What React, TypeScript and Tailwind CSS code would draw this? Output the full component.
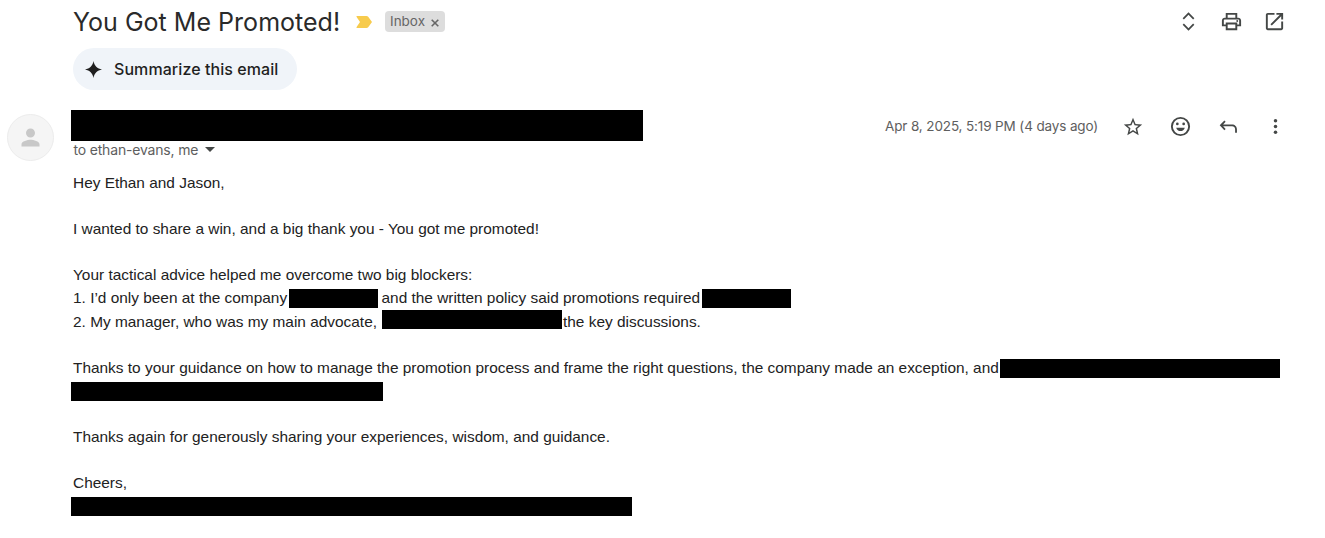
import type { ReactNode } from 'react';
import clsx from 'clsx';

function Icon({ className, children }: { className?: string; children: ReactNode }) {
  return (
    <svg viewBox="0 0 24 24" fill="currentColor" aria-hidden="true" className={clsx('block shrink-0', className)}>
      {children}
    </svg>
  );
}

function Redacted({ className }: { className?: string }) {
  return <span className={clsx('block shrink-0 bg-black', className)} />;
}

function Line({ children }: { children?: ReactNode }) {
  return <div className="flex h-[23.1px] items-start whitespace-pre">{children}</div>;
}

function Subject() {
  return (
    <div className="flex h-[43px] items-center pl-[73px] pr-[41px]">
      <h1 className="w-[283px] whitespace-nowrap font-['Inter','Liberation_Sans',sans-serif] text-[25px] leading-[42px] font-normal tracking-[0.02px] text-[#2a2a2a]">
        You Got Me Promoted!
      </h1>
      <svg viewBox="0 0 16 12" aria-hidden="true" className="mr-[13px] h-3 w-4 fill-[#f7cb4d]">
        <path d="M1 0h9.5q1 0 1.7.8L16 6l-3.8 5.2q-.7.8-1.7.8H1q-1 0-.4-.9L4 6 .6.9Q0 0 1 0z" />
      </svg>
      <div className="flex h-[21px] w-[60px] items-center rounded-[4px] bg-[#dddddd] pl-[5px] font-['Inter','Liberation_Sans',sans-serif] text-[13.5px] text-[#666666]">
        <span className="w-[41px]">Inbox</span>
        <svg viewBox="0 0 8 8" aria-hidden="true" className="mt-0.5 size-[8px] fill-none stroke-current stroke-[1.6]">
          <path d="M.7.7l6.6 6.6M7.3.7L.7 7.3" />
        </svg>
      </div>
      <div className="ml-auto flex items-center text-[#444746]">
        <Icon className="mr-[20px] size-[23px]">
          <path d="M12 5l4.8 4.800 1.300-1.300L12 2.400 5.900 8.500l1.300 1.300zM12 19l-4.800-4.800-1.300 1.300L12 21.600l6.100-6.100-1.300-1.300z" />
        </Icon>
        <Icon className="mr-[20px] size-[23px]">
          <path d="M19 8h-1V3H6v5H5c-1.66 0-3 1.34-3 3v6h4v4h12v-4h4v-6c0-1.66-1.34-3-3-3zM8 5h8v3H8V5zm8 12v2H8v-4h8v2zm2-2v-2H6v2H4v-4c0-.55.45-1 1-1h14c.55 0 1 .45 1 1v4h-2z" />
          <circle cx="18" cy="11.5" r="1" />
        </Icon>
        <Icon className="-mr-[2px] size-[23px]">
          <path d="M19 19H5V5h7V3H5c-1.1 0-2 .9-2 2v14c0 1.1.9 2 2 2h14c1.1 0 2-.9 2-2v-7h-2v7zM14 3v2h3.59l-9.83 9.83 1.41 1.41L19 6.41V10h2V3h-7z" />
        </Icon>
      </div>
    </div>
  );
}

function SenderRow() {
  return (
    <div className="flex h-[52px]">
      <div className="mt-1 ml-[7px] flex size-[47px] items-center justify-center rounded-full border border-[#ececec] bg-[#f5f5f5] text-[#c8c8c8]">
        <Icon className="size-[27px]">
          <path d="M12 12c2.21 0 4-1.79 4-4s-1.79-4-4-4-4 1.79-4 4 1.79 4 4 4zm0 2c-2.67 0-8 1.34-8 4v2h16v-2c0-2.66-5.33-4-8-4z" />
        </Icon>
      </div>
      <div className="ml-[17px]">
        <Redacted className="h-[31px] w-[572px]" />
        <div className="flex h-[17px] items-center pl-[2.5px] font-['Inter','Liberation_Sans',sans-serif] text-[14px] tracking-[-0.18px] text-[#5e5e5e]">
          <span className="w-[131px] whitespace-nowrap">to ethan-evans, me</span>
          <svg viewBox="0 0 10 5" aria-hidden="true" className="h-[5px] w-[10px] fill-[#444746]">
            <path d="M0 0h10L5 5z" />
          </svg>
        </div>
      </div>
      <div className="ml-auto flex h-[33px] items-center pr-[39px] text-[#444746]">
        <span className="w-[237px] whitespace-nowrap font-['Inter','Liberation_Sans',sans-serif] text-[13.5px] tracking-[-0.13px] text-[#5e5e5e]">
          Apr 8, 2025, 5:19 PM (4 days ago)
        </span>
        <Icon className="mr-[25px] size-[22px]">
          <path d="M22 9.24l-7.19-.62L12 2 9.19 8.63 2 9.24l5.46 4.73L5.82 21 12 17.27 18.18 21l-1.63-7.03L22 9.24zM12 15.4l-3.76 2.27 1-4.28-3.32-2.88 4.38-.38L12 6.1l1.71 4.04 4.38.38-3.32 2.88 1 4.28L12 15.4z" />
        </Icon>
        <Icon className="mr-[25px] size-[23px]">
          <path d="M12 2a10 10 0 1 0 0 20 10 10 0 0 0 0-20zm0 18a8 8 0 1 1 0-16 8 8 0 0 1 0 16z" />
          <circle cx="8.7" cy="9.3" r="1.4" />
          <circle cx="15.3" cy="9.3" r="1.4" />
          <path d="M7.5 13.3h9c-.7 2.200-2.400 3.500-4.500 3.500s-3.800-1.300-4.500-3.500z" />
        </Icon>
        <Icon className="mr-[25px] size-[23px]">
          <path d="M7.7 5.800L9 7.100 6.400 9.900H15.700c2.900 0 5.100 2.200 5.100 5.100V18.500h-1.900V15c0-1.900-1.400-3.200-3.200-3.200H6.400L9 14.500l-1.300 1.300L2.800 10.800z" />
        </Icon>
        <Icon className="size-[21px]">
          <circle cx="12" cy="5.3" r="2" />
          <circle cx="12" cy="12" r="2" />
          <circle cx="12" cy="18.7" r="2" />
        </Icon>
      </div>
    </div>
  );
}

function Message() {
  return (
    <div className="mt-[9px] pl-[73px] font-['Liberation_Sans',Arial,sans-serif] text-[15.42px] leading-[23px] text-[#222222]">
      <Line>Hey Ethan and Jason,</Line>
      <Line />
      <Line>I wanted to share a win, and a big thank you - You got me promoted!</Line>
      <Line />
      <Line>Your tactical advice helped me overcome two big blockers:</Line>
      <Line>
        <span className="w-[216px]">1. I’d only been at the company</span>
        <Redacted className="mt-[3px] h-[18.5px] w-[89px]" />
        <span className="w-[324px] pl-[3.5px]">and the written policy said promotions required</span>
        <Redacted className="mt-[3px] h-[18.5px] w-[89px]" />
      </Line>
      <Line>
        <span className="w-[308.5px]">2. My manager, who was my main advocate,</span>
        <Redacted className="h-[19px] w-[180px]" />
        <span className="pl-[1.5px]">the key discussions.</span>
      </Line>
      <Line />
      <Line>
        <span className="w-[927px]">
          Thanks to your guidance on how to manage the promotion process and frame the right questions, the company made an exception, and
        </span>
        <Redacted className="mt-[3px] h-[19px] w-[280px]" />
      </Line>
      <Line>
        <Redacted className="-ml-[2px] mt-[3px] h-[19px] w-[312px]" />
      </Line>
      <Line />
      <Line>Thanks again for generously sharing your experiences, wisdom, and guidance.</Line>
      <Line />
      <Line>Cheers,</Line>
      <Line>
        <Redacted className="-ml-[2px] mt-[3px] h-[19px] w-[561px]" />
      </Line>
    </div>
  );
}

export default function App() {
  return (
    <main className="h-[538px] w-[1325px] overflow-hidden bg-white">
      <Subject />
      <button className="mt-[5px] ml-[73px] flex h-[42px] w-[224px] items-center rounded-full bg-[#f0f4f9] pl-[12px] text-[#1f1f1f]">
        <svg viewBox="0 0 16 16" aria-hidden="true" className="mr-[12px] size-[17px] fill-current">
          <path d="M8 0C8.8 4.5 11.5 7.2 16 8 11.5 8.8 8.8 11.5 8 16 7.2 11.5 4.5 8.8 0 8 4.5 7.2 7.2 4.5 8 0z" />
        </svg>
        <span className="whitespace-nowrap font-['Inter','Liberation_Sans',sans-serif] text-[16px] font-medium tracking-[0.07px]">
          Summarize this email
        </span>
      </button>
      <div className="h-5" />
      <SenderRow />
      <Message />
    </main>
  );
}
